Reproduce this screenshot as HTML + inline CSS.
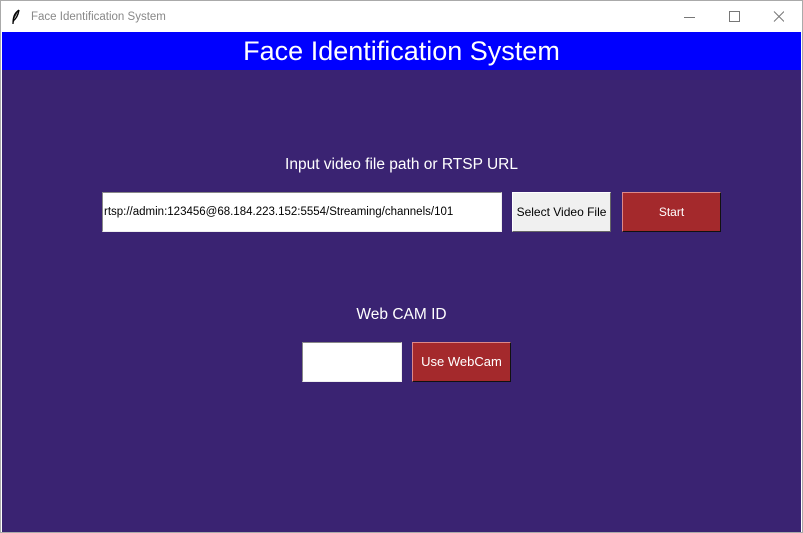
<!DOCTYPE html>
<html><head><style>
body{margin:0;width:803px;height:533px;overflow:hidden;font-family:"Liberation Sans",sans-serif;background:#fff}
.win{position:absolute;left:0;top:0;width:801px;height:531px;border:1px solid #aaa;background:#fff}
.title{position:absolute;left:30px;top:10px;font-size:11.5px;color:#888}
.ctl{position:absolute;top:6px;font-size:14px;color:#666}
.banner{position:absolute;left:2px;top:32px;width:799px;height:38px;background:#0000ff;color:#fff;font-size:27px;text-align:center;line-height:38px}
.main{position:absolute;left:2px;top:70px;width:799px;height:462px;background:#3a2372}
.lbl{position:absolute;color:#fff;font-size:15.5px;text-align:center;width:799px;left:2px}
.box{position:absolute;box-sizing:border-box}
.entry{background:#fff;border:1px solid #888;border-right-color:#eee;border-bottom-color:#eee;font-size:11.5px;line-height:38px;padding-left:1px;color:#000}
.btn{font-size:12px;text-align:center;line-height:38px;border:1px solid;}
.red{background:#a4292c;color:#fff;border-color:#d88 #111 #111 #d88}
.gray{background:#f0f0f0;color:#000;border-color:#fff #666 #666 #fff}
</style></head><body>
<div class="win">
<svg style="position:absolute;left:10px;top:8px" width="10" height="16"><path d="M8 1 C3 4 2 9 2 15 M8 1 C7 7 5 10 2 12" stroke="#000" fill="#333" stroke-width="1.3"/></svg>
<div class="title">Face Identification System</div>
<svg style="position:absolute;left:683px;top:10px" width="100" height="12"><path d="M0 6.5H11" stroke="#777"/><path d="M45.5 0.5h10v10h-10z" stroke="#777" fill="none"/><path d="M90 0.5l10 10M100 0.5l-10 10" stroke="#777"/></svg>
</div>
<div class="banner">Face Identification System</div>
<div class="main"></div>
<div class="lbl" style="top:156px">Input video file path or RTSP URL</div>
<div class="box entry" style="left:102px;top:192px;width:400px;height:40px">rtsp://admin:123456@68.184.223.152:5554/Streaming/channels/101</div>
<div class="box btn gray" style="left:512px;top:192px;width:99px;height:40px">Select Video File</div>
<div class="box btn red" style="left:622px;top:192px;width:99px;height:40px">Start</div>
<div class="lbl" style="top:306px">Web CAM ID</div>
<div class="box entry" style="left:302px;top:342px;width:100px;height:40px"></div>
<div class="box btn red" style="left:412px;top:342px;width:99px;height:40px;font-size:13px">Use WebCam</div>
</body></html>
